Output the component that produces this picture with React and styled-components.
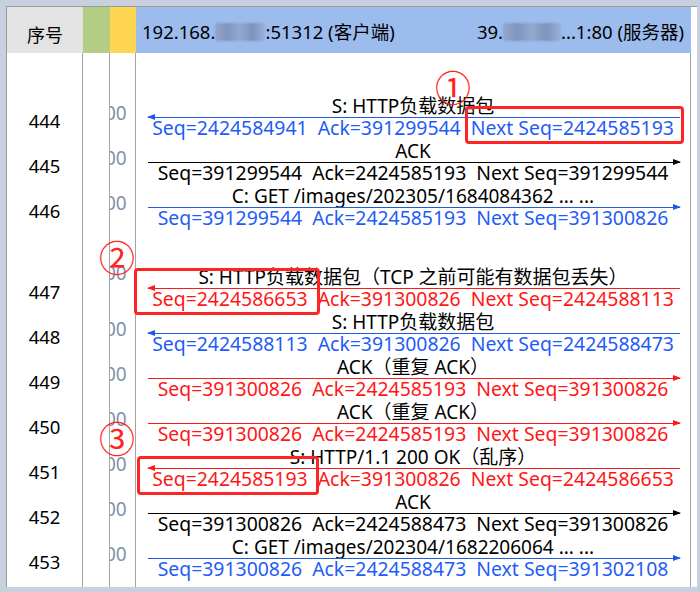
import React from "react";
import styled, { createGlobalStyle, css } from "styled-components";

const GlobalStyle = createGlobalStyle`
  html, body {
    margin: 0;
    padding: 0;
    background: #c8d0de;
  }
  body {
    font-family: "Noto Sans", "Noto Sans CJK SC", sans-serif;
  }
`;

const COLORS = {
  blue: "#1f5cf7",
  red: "#ff1616",
  black: "#000000",
};

const LINE_COLORS = {
  blue: "#1f5ae6",
  red: "#ff1a1a",
  black: "#000000",
};

const COLS = "76px 27px 26px 555px";

const Page = styled.div`
  position: relative;
  width: 700px;
  height: 592px;
  box-sizing: border-box;
  padding: 6px 3px 5px 6px;
  background: #c8d0de;
  overflow: hidden;
`;

const Panel = styled.div`
  height: 100%;
  box-sizing: border-box;
  border-left: 1px solid #9a9a9a;
  border-top: 1px solid #9a9a9a;
  background: #ffffff;
  display: flex;
  flex-direction: column;
`;

const Header = styled.div`
  display: grid;
  grid-template-columns: ${COLS};
  height: 46px;
  flex: none;
`;

const HeadCell = styled.div`
  background: ${(p) => p.$bg};
  font-size: 18.5px;
  color: #000;
`;

const NoHead = styled(HeadCell)`
  text-align: center;
  font-size: 18px;
  line-height: 24px;
  padding-top: 16px;
`;

const HostHead = styled(HeadCell)`
  display: flex;
  justify-content: space-between;
  align-items: flex-start;
  padding: 13px 7px 0 6px;
  line-height: 24px;
  white-space: pre;
`;

const Host = styled.span`
  display: inline-flex;
  align-items: center;
`;

const Blur = styled.span`
  display: inline-block;
  width: ${(p) => p.$w}px;
  height: 18px;
  background: linear-gradient(
    90deg,
    #93a7cc 0%,
    #7f95bf 25%,
    #95a9cf 50%,
    #7c93bd 75%,
    #9bb0d8 100%
  );
  filter: blur(1.2px);
`;

const Body = styled.div`
  flex: 1;
  display: flex;
  flex-direction: column;
`;

const Row = styled.div`
  display: grid;
  grid-template-columns: ${COLS};
  height: ${(p) => p.$h}px;
  flex: none;
`;

const Cell = styled.div`
  box-sizing: border-box;
  border-right: 1px solid #a3a3a3;
  overflow: hidden;
`;

const NumCell = styled(Cell)`
  text-align: center;
  font-size: 18.5px;
  line-height: 23px;
  padding-top: 14px;
  color: #000;
`;

const TimeCell = styled(Cell)`
  font-size: 19px;
  line-height: 14px;
  padding-top: ${(p) => p.$top}px;
  color: #8292aa;
  white-space: nowrap;
`;

const TimeText = styled.span`
  display: inline-block;
  margin-left: -5px;
`;

const MsgCell = styled(Cell)`
  overflow: visible;
`;

const Label = styled.div`
  height: 22px;
  line-height: 22px;
  text-align: center;
  font-size: 19px;
  color: #000;
  white-space: pre;
`;

const Arrow = styled.div`
  position: relative;
  height: 1px;
  margin: 0 10px 0 12px;
  background: ${(p) => LINE_COLORS[p.$color]};
  &::after {
    content: "";
    position: absolute;
    top: -3px;
    border-top: 3.5px solid transparent;
    border-bottom: 3.5px solid transparent;
    ${(p) =>
      p.$dir === "left"
        ? css`
            left: -1px;
            border-right: 8px solid ${LINE_COLORS[p.$color]};
          `
        : css`
            right: -1px;
            border-left: 8px solid ${LINE_COLORS[p.$color]};
          `}
  }
`;

const Seq = styled.div`
  height: 20px;
  line-height: 20px;
  text-align: center;
  font-size: 19.4px;
  color: ${(p) => COLORS[p.$color]};
  white-space: pre;
`;

const Box = styled.div`
  position: absolute;
  left: ${(p) => p.$x}px;
  top: ${(p) => p.$y}px;
  width: ${(p) => p.$w}px;
  height: ${(p) => p.$h}px;
  box-sizing: border-box;
  border: 3px solid #ff2424;
  border-radius: 4px;
  pointer-events: none;
`;

const Marker = styled.div`
  position: absolute;
  left: ${(p) => p.$x - 20}px;
  top: ${(p) => p.$y - 20}px;
  width: 40px;
  height: 40px;
  line-height: 40px;
  text-align: center;
  font-family: "Noto Sans CJK SC", sans-serif;
  font-size: 36px;
  color: #ff2424;
  pointer-events: none;
`;

const groups = [
  [
    {
      n: 444,
      dir: "left",
      color: "blue",
      label: "S: HTTP负载数据包",
      seq: "Seq=2424584941  Ack=391299544  Next Seq=2424585193",
    },
    {
      n: 445,
      dir: "right",
      color: "black",
      label: "ACK",
      seq: "Seq=391299544  Ack=2424585193  Next Seq=391299544",
    },
    {
      n: 446,
      dir: "right",
      color: "blue",
      label: "C: GET /images/202305/1684084362 ... ...",
      seq: "Seq=391299544  Ack=2424585193  Next Seq=391300826",
    },
  ],
  [
    {
      n: 447,
      dir: "left",
      color: "red",
      timeTop: 0,
      label: "S: HTTP负载数据包（TCP 之前可能有数据包丢失）",
      seq: "Seq=2424586653  Ack=391300826  Next Seq=2424588113",
    },
    {
      n: 448,
      dir: "left",
      color: "blue",
      label: "S: HTTP负载数据包",
      seq: "Seq=2424588113  Ack=391300826  Next Seq=2424588473",
    },
    {
      n: 449,
      dir: "right",
      color: "red",
      label: "ACK（重复 ACK）",
      seq: "Seq=391300826  Ack=2424585193  Next Seq=391300826",
    },
    {
      n: 450,
      dir: "right",
      color: "red",
      label: "ACK（重复 ACK）",
      seq: "Seq=391300826  Ack=2424585193  Next Seq=391300826",
    },
    {
      n: 451,
      dir: "left",
      color: "red",
      label: "S: HTTP/1.1 200 OK（乱序）",
      seq: "Seq=2424585193  Ack=391300826  Next Seq=2424586653",
    },
    {
      n: 452,
      dir: "right",
      color: "black",
      label: "ACK",
      seq: "Seq=391300826  Ack=2424588473  Next Seq=391300826",
    },
    {
      n: 453,
      dir: "right",
      color: "blue",
      label: "C: GET /images/202304/1682206064 ... ...",
      seq: "Seq=391300826  Ack=2424588473  Next Seq=391302108",
    },
  ],
];

function Spacer({ h }) {
  return (
    <Row $h={h}>
      <Cell />
      <Cell />
      <Cell />
      <Cell />
    </Row>
  );
}

function MessageRow({ m }) {
  return (
    <Row $h={45}>
      <NumCell>{m.n}</NumCell>
      <Cell />
      <TimeCell $top={m.timeTop ?? 11}>
        <TimeText>00</TimeText>
      </TimeCell>
      <MsgCell>
        <Label>{m.label}</Label>
        <Arrow $dir={m.dir} $color={m.color} />
        <Seq $color={m.color}>{m.seq}</Seq>
      </MsgCell>
    </Row>
  );
}

export default function App() {
  return (
    <>
      <GlobalStyle />
      <Page>
        <Panel>
          <Header>
            <NoHead $bg="#e3e3e3">序号</NoHead>
            <HeadCell $bg="#b3cd84" />
            <HeadCell $bg="#ffd652" />
            <HostHead $bg="#9dbcee">
              <Host>
                192.168.
                <Blur $w={50} />
                :51312 (客户端)
              </Host>
              <Host>
                39.
                <Blur $w={58} />
                ...1:80 (服务器)
              </Host>
            </HostHead>
          </Header>
          <Body>
            <Spacer h={42} />
            {groups[0].map((m) => (
              <MessageRow key={m.n} m={m} />
            ))}
            <Spacer h={36} />
            {groups[1].map((m) => (
              <MessageRow key={m.n} m={m} />
            ))}
            <Spacer h={6} />
          </Body>
        </Panel>
        <Box $x={465} $y={106} $w={219} $h={38} />
        <Box $x={134} $y={268} $w={186} $h={47} />
        <Box $x={137} $y={456} $w={182} $h={39} />
        <Marker $x={453} $y={86}>①</Marker>
        <Marker $x={117} $y={256}>②</Marker>
        <Marker $x={117} $y={437}>③</Marker>
      </Page>
    </>
  );
}
